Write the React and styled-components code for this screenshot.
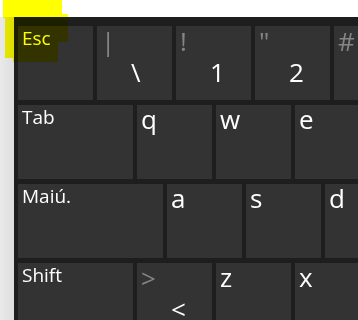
import React from 'react'
import styled, { createGlobalStyle } from 'styled-components'

const GlobalStyle = createGlobalStyle`
html, body {
    margin: 0;
    padding: 0;
    background: #ffffff;
}
`

const Page = styled.div`
position: relative;
width: 358px;
height: 320px;
overflow: hidden;
padding-top: 17px;
box-sizing: border-box;
display: flex;
font-family: "Open Sans", "Noto Sans", sans-serif;
`

const SideStrip = styled.div`
flex: 0 0 14px;
background: linear-gradient(to right, #e9e9e9, #dedede);
`

const Board = styled.div`
flex: 0 0 auto;
width: 420px;
background: #1e1e1e;
padding: 9px 0 0 4px;
display: flex;
flex-direction: column;
gap: 5px;
`

const Row = styled.div`
display: flex;
gap: 4px;
`

const Key = styled.div`
flex: 0 0 ${props => props.width}px;
height: 74px;
box-sizing: border-box;
background: #333333;
padding-left: 4px;
display: flex;
flex-direction: column;
align-items: flex-start;
color: #ffffff;
line-height: 1;
`

const Label = styled.span`
font-size: 19px;
margin-top: 3px;
`

const Letter = styled.span`
font-size: 26px;
margin-top: 1px;
`

const ShiftChar = styled.span`
font-size: 26px;
margin-top: 2px;
color: #858585;
height: 26px;
`

const MainChar = styled.span`
font-size: 26px;
margin-top: 5px;
margin-left: 30px;
`

const Highlight = styled.div`
position: absolute;
background: #ffff00;
mix-blend-mode: multiply;
pointer-events: none;
`

const rows = [
    [
        { label: 'Esc', width: 75 },
        { shift: '|', main: '\\' },
        { shift: '!', main: '1' },
        { shift: '"', main: '2' },
        { shift: '#' }
    ],
    [
        { label: 'Tab', width: 115 },
        { letter: 'q' },
        { letter: 'w' },
        { letter: 'e' }
    ],
    [
        { label: 'Maiú.', width: 145 },
        { letter: 'a' },
        { letter: 's' },
        { letter: 'd' }
    ],
    [
        { label: 'Shift', width: 115 },
        { shift: '>', main: '<' },
        { letter: 'z' },
        { letter: 'x' }
    ]
]

// highlighter marks over the Esc corner
const marks = [
    { left: 3, top: 0, width: 59, height: 18 },
    { left: 5, top: 14, width: 63, height: 28 },
    { left: 5, top: 42, width: 53, height: 16 },
    { left: 13, top: 56, width: 45, height: 6 }
]

const App = () => {
    return (
        <>
            <GlobalStyle />
            <Page>
                <SideStrip />
                <Board>
                    {rows.map((row, i) => (
                        <Row key={i}>
                            {row.map((k, j) => (
                                <Key key={j} width={k.width || 75}>
                                    {k.label && <Label>{k.label}</Label>}
                                    {k.letter && <Letter>{k.letter}</Letter>}
                                    {k.shift && <ShiftChar>{k.shift}</ShiftChar>}
                                    {k.main && <MainChar>{k.main}</MainChar>}
                                </Key>
                            ))}
                        </Row>
                    ))}
                </Board>
                {marks.map((m, i) => (
                    <Highlight key={i} style={m} />
                ))}
            </Page>
        </>
    )
}

export default App
